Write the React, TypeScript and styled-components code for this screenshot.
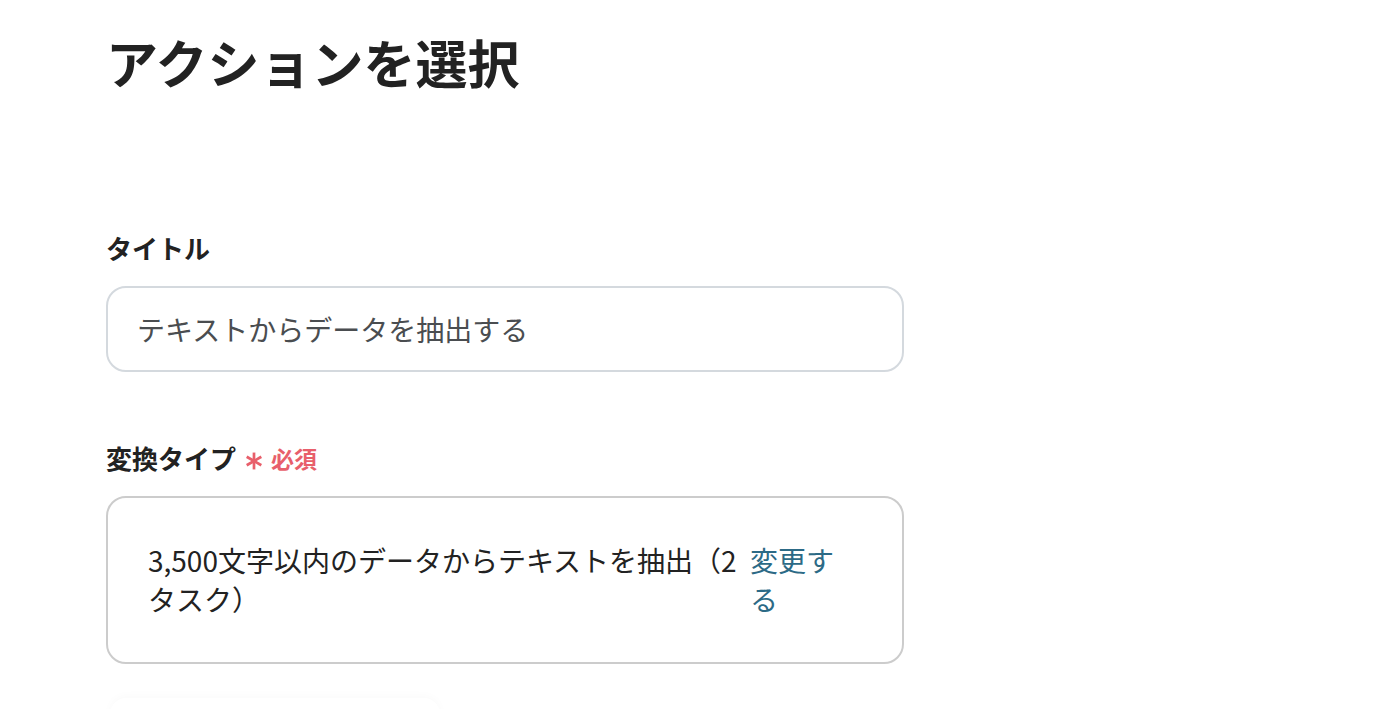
import React from "react";
import styled, { createGlobalStyle } from "styled-components";

const Global = createGlobalStyle`
  html, body { margin: 0; padding: 0; background: #ffffff; }
  body {
    font-family: "Noto Sans CJK JP", "Noto Sans", sans-serif;
    color: #222222;
    overflow: hidden;
  }
`;

const Page = styled.main`
  width: 798px;
  padding: 22px 0 0 106px;
  display: flex;
  flex-direction: column;
`;

const Heading = styled.h1`
  margin: 0;
  font-size: 52px;
  line-height: 80px;
  font-weight: 700;
  color: #222222;
`;

const Form = styled.div`
  margin-top: 128px;
  display: flex;
  flex-direction: column;
  gap: 68px;
`;

const Field = styled.section`
  display: flex;
  flex-direction: column;
  gap: 20px;
`;

const Label = styled.div`
  display: flex;
  align-items: center;
  gap: 9px;
  font-size: 26px;
  line-height: 36px;
  font-weight: 700;
  color: #222222;
`;

const Required = styled.span`
  display: inline-flex;
  align-items: center;
  gap: 8px;
  font-size: 23px;
  font-weight: 700;
  color: #e85f6b;
`;

const StarIcon = styled.svg`
  width: 18px;
  height: 18px;
  margin-top: 5px;
  flex: none;
`;

const TextInput = styled.div`
  box-sizing: border-box;
  height: 86px;
  border: 2px solid #d4d9de;
  border-radius: 20px;
  padding: 0 29px;
  display: flex;
  align-items: center;
  font-size: 28px;
  color: #4a4d50;
`;

const SelectBox = styled.div`
  box-sizing: border-box;
  min-height: 166px;
  border: 2px solid #cccccc;
  border-radius: 20px;
  padding: 43px 52px 43px 40px;
  display: flex;
  align-items: center;
  gap: 12px;
`;

const SelectText = styled.div`
  flex: 1;
  font-size: 28px;
  line-height: 39px;
  color: #222222;
`;

const ChangeLink = styled.a`
  width: 100px;
  flex: none;
  font-size: 28px;
  line-height: 39px;
  color: #2c6a86;
  text-decoration: none;
  cursor: pointer;
`;

const Ghost = styled.div`
  margin-top: 34px;
  margin-left: 4px;
  width: 330px;
  height: 40px;
  border-radius: 16px;
  background: #ffffff;
  box-shadow: 0 -2px 10px rgba(0, 0, 0, 0.025);
`;

const Asterisk = () => (
  <StarIcon viewBox="0 0 16 16" aria-hidden="true">
    <g stroke="#e85f6b" strokeWidth="2.4" strokeLinecap="butt">
      <line x1="8" y1="0.5" x2="8" y2="15.5" />
      <line x1="1.5" y1="4.25" x2="14.5" y2="11.75" />
      <line x1="1.5" y1="11.75" x2="14.5" y2="4.25" />
    </g>
  </StarIcon>
);

export default function App() {
  return (
    <>
      <Global />
      <Page>
        <Heading>アクションを選択</Heading>
        <Form>
          <Field>
            <Label>タイトル</Label>
            <TextInput>テキストからデータを抽出する</TextInput>
          </Field>
          <Field>
            <Label>
              変換タイプ
              <Required>
                <Asterisk />
                必須
              </Required>
            </Label>
            <SelectBox>
              <SelectText>3,500文字以内のデータからテキストを抽出（2タスク）</SelectText>
              <ChangeLink>変更する</ChangeLink>
            </SelectBox>
          </Field>
        </Form>
        <Ghost />
      </Page>
    </>
  );
}
